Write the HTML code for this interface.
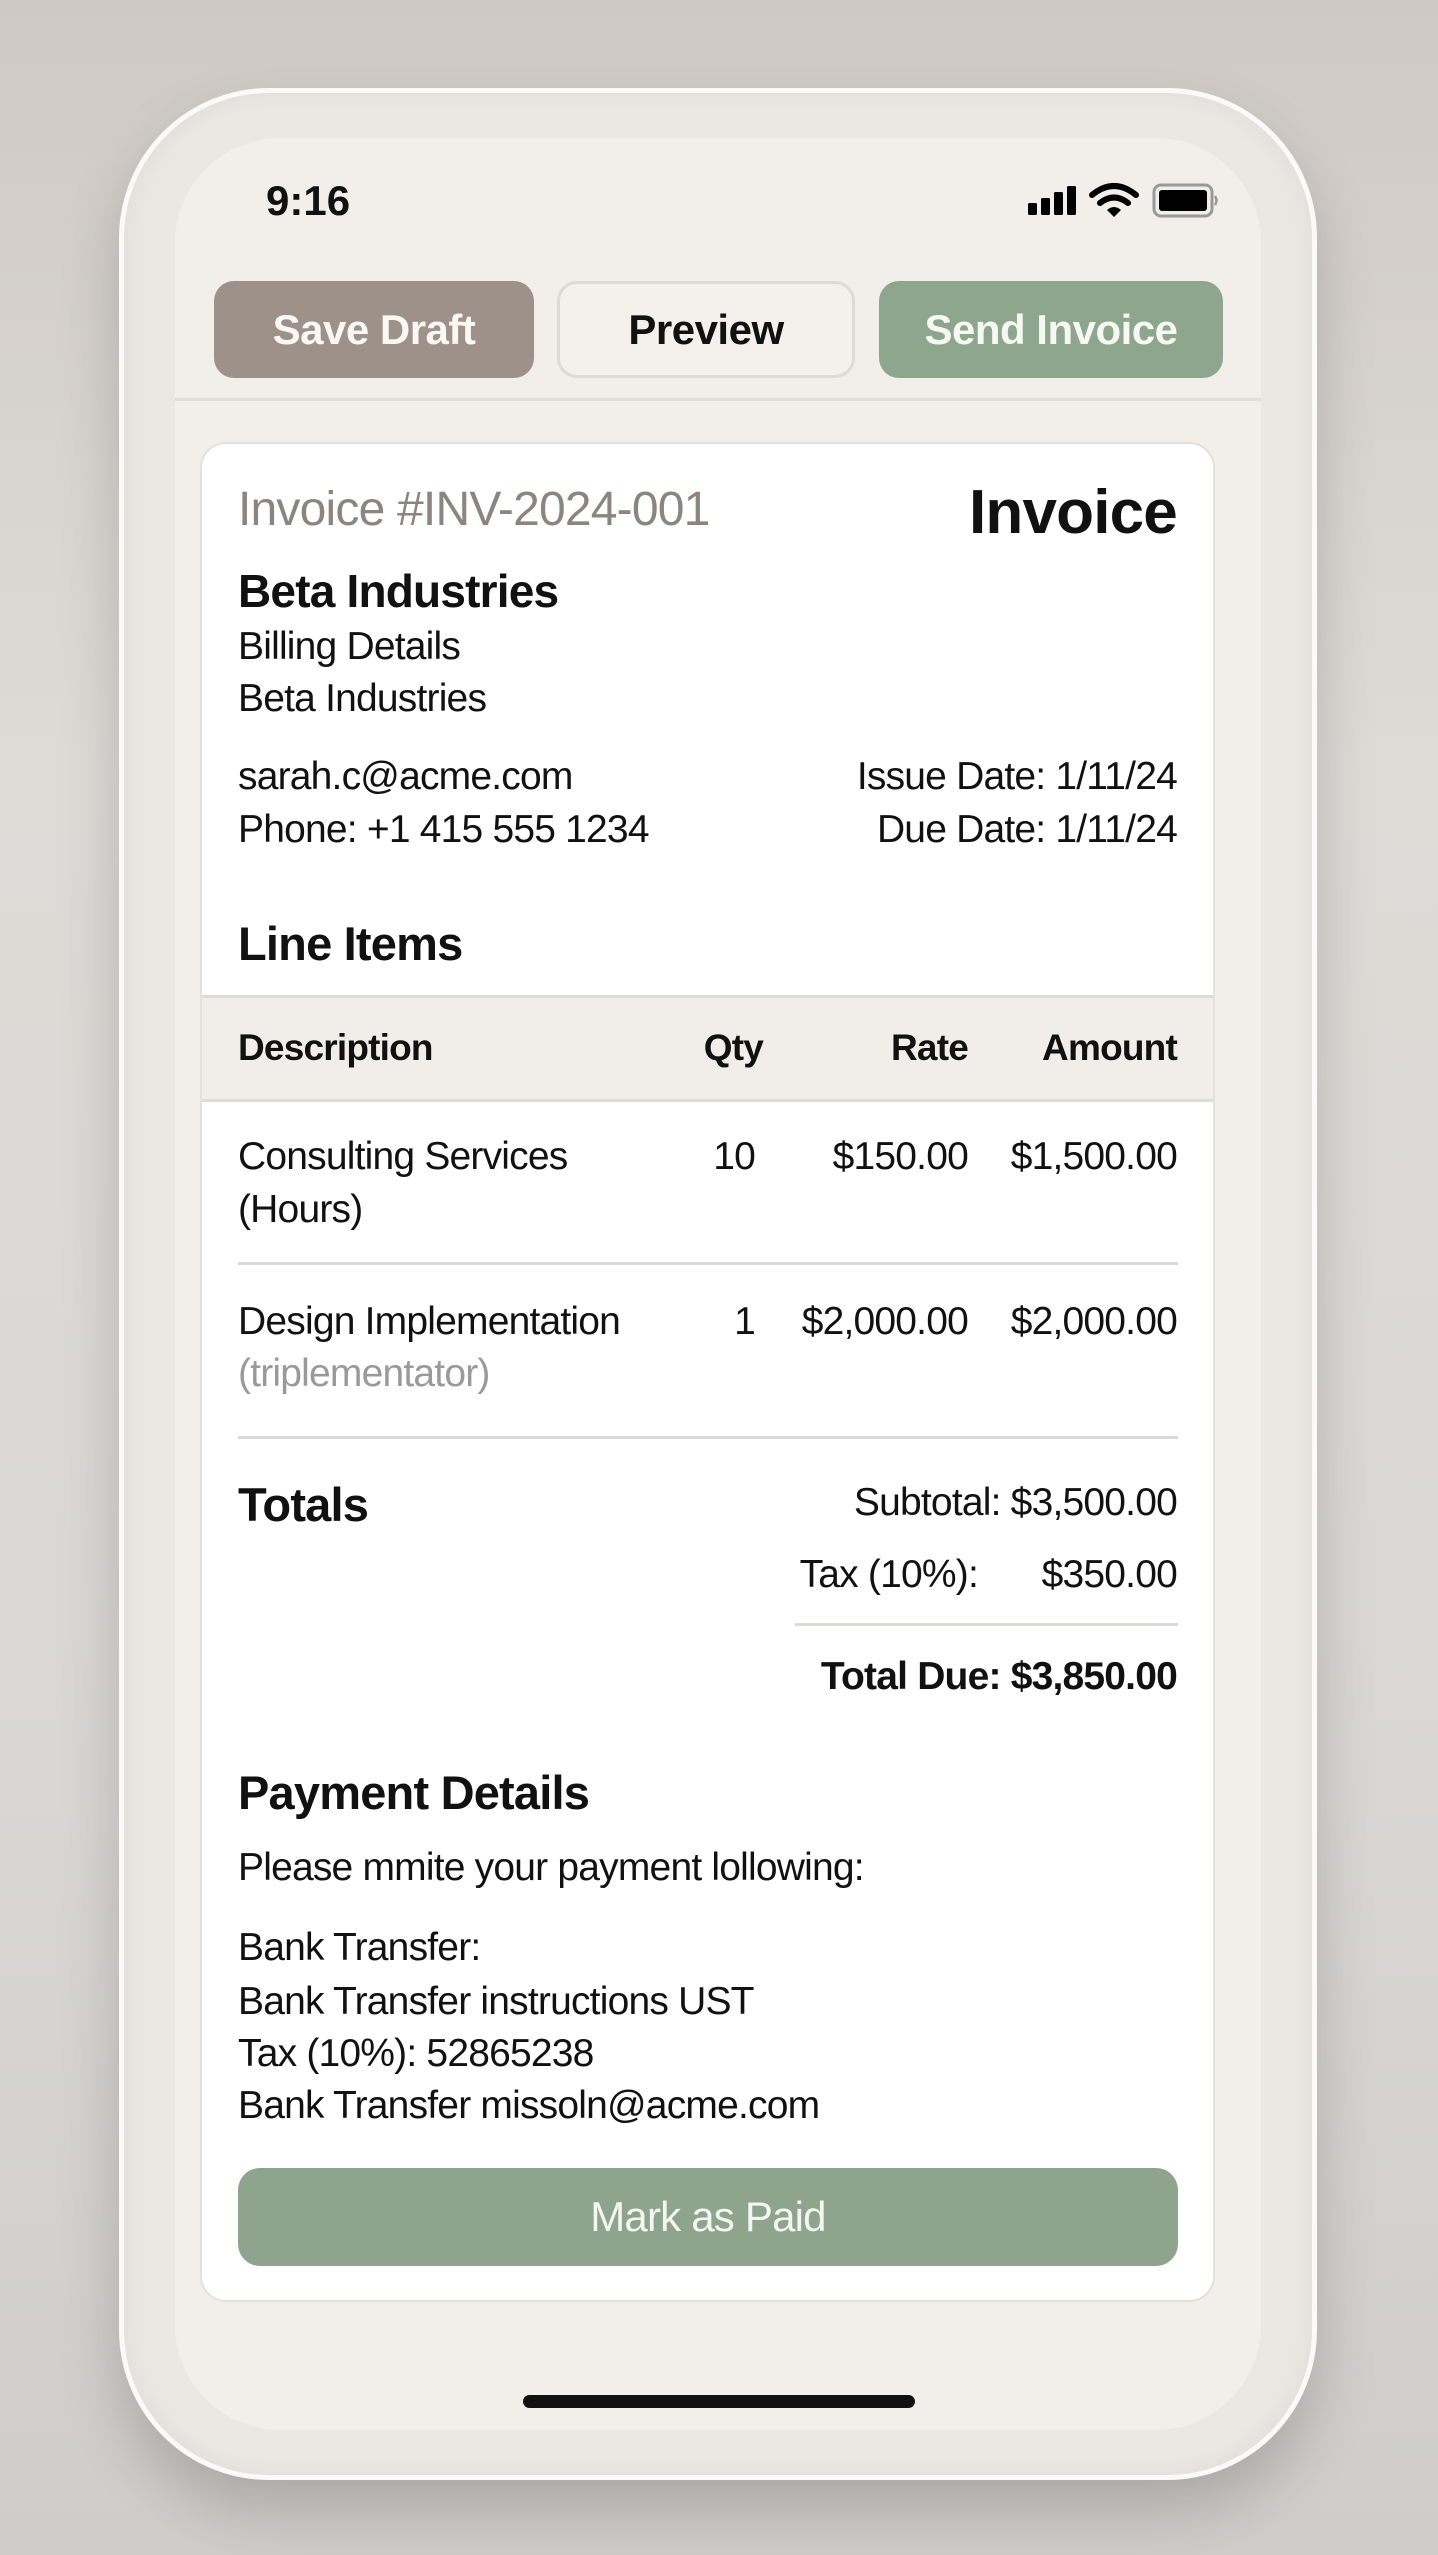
<!DOCTYPE html>
<html><head><meta charset="utf-8">
<style>
*{margin:0;padding:0;box-sizing:border-box}
html,body{width:1438px;height:2555px;overflow:hidden}
body{background:linear-gradient(180deg,#cfc9c3 0%,#dedbd7 30%,#d9d7d4 70%,#cfccc9 100%);font-family:"Liberation Sans",sans-serif;color:#111;position:relative;letter-spacing:-0.8px}
.phone{position:absolute;left:119px;top:88px;width:1198px;height:2392px;border-radius:150px;background:#ebe7e2;border:5px solid #fbfaf8;box-shadow:0 30px 60px rgba(0,0,0,.18),inset 0 0 30px rgba(0,0,0,.05)}
.screen{position:absolute;left:175px;top:138px;width:1086px;height:2292px;border-radius:105px;background:#f2efea;overflow:hidden}
.a{position:absolute;white-space:nowrap}
.btn{position:absolute;top:281px;height:97px;border-radius:20px;display:flex;align-items:center;justify-content:center;font-weight:bold;font-size:42px;letter-spacing:-0.5px}
.card{position:absolute;left:200px;top:442px;width:1015px;height:1860px;background:#fff;border-radius:26px;border:2px solid #e4e0da}
.r{text-align:right}
.t{font-size:39px;line-height:50px}
.hr{position:absolute;height:3px;background:#dcdad7}
</style></head><body>
<div class="phone"></div>
<div class="screen"></div>
<div class="a" style="left:266px;top:176px;font-size:42px;font-weight:bold;line-height:50px;letter-spacing:0">9:16</div>
<svg class="a" style="left:1026px;top:183px" width="192" height="36" viewBox="0 0 192 36">
<rect x="2" y="20" width="9" height="12" rx="1.5"/><rect x="15" y="15" width="9" height="17" rx="1.5"/><rect x="28" y="9" width="9" height="23" rx="1.5"/><rect x="41" y="3" width="9" height="29" rx="1.5"/>
<path d="M66 12 Q88 -6 110 12" fill="none" stroke="#000" stroke-width="6" stroke-linecap="round"/>
<path d="M74 20 Q88 9 102 20" fill="none" stroke="#000" stroke-width="6" stroke-linecap="round"/>
<path d="M81 27 L88 34 L95 27 Q88 21 81 27Z"/>
<rect x="128" y="2" width="58" height="31" rx="7" fill="none" stroke="#999" stroke-width="3"/>
<rect x="133" y="7" width="48" height="21" rx="3"/>
<path d="M189 13 Q192 17.5 189 22" fill="none" stroke="#999" stroke-width="2.5"/>
</svg>
<div class="btn" style="left:214px;width:320px;background:#9d918a;color:#fbf8f4">Save Draft</div>
<div class="btn" style="left:557px;width:298px;background:#f4f1ec;border:3px solid #dedad4;color:#111">Preview</div>
<div class="btn" style="left:879px;width:344px;background:#8ea68d;color:#f6f8f3">Send Invoice</div>
<div class="a" style="left:175px;top:398px;width:1086px;height:3px;background:#e0ddd8"></div>
<div class="card"></div>
<div class="a" style="left:238px;top:482px;font-size:48px;line-height:56px;color:#8c847e">Invoice #INV-2024-001</div>
<div class="a r" style="right:261px;top:478px;font-size:62px;line-height:70px;font-weight:bold">Invoice</div>
<div class="a" style="left:238px;top:563px;font-size:46px;line-height:56px;font-weight:bold">Beta Industries</div>
<div class="a t" style="left:238px;top:622px">Billing Details</div>
<div class="a t" style="left:238px;top:674px">Beta Industries</div>
<div class="a t" style="left:238px;top:752px">sarah.c@acme.com</div>
<div class="a t" style="left:238px;top:805px">Phone: +1 415 555 1234</div>
<div class="a t r" style="right:261px;top:752px">Issue Date: 1/11/24</div>
<div class="a t r" style="right:261px;top:805px">Due Date: 1/11/24</div>
<div class="a" style="left:238px;top:916px;font-size:47px;line-height:56px;font-weight:bold">Line Items</div>
<div class="a" style="left:202px;top:995px;width:1011px;height:107px;background:#f1eee9;border-top:3px solid #dedbd6;border-bottom:3px solid #dedbd6"></div>
<div class="a" style="left:238px;top:1024px;font-size:37px;line-height:48px;font-weight:bold">Description</div>
<div class="a r" style="right:675px;top:1024px;font-size:37px;line-height:48px;font-weight:bold">Qty</div>
<div class="a r" style="right:470px;top:1024px;font-size:37px;line-height:48px;font-weight:bold">Rate</div>
<div class="a r" style="right:261px;top:1024px;font-size:37px;line-height:48px;font-weight:bold">Amount</div>
<div class="a t" style="left:238px;top:1132px">Consulting Services</div>
<div class="a t" style="left:238px;top:1185px">(Hours)</div>
<div class="a t r" style="right:683px;top:1132px">10</div>
<div class="a t r" style="right:470px;top:1132px">$150.00</div>
<div class="a t r" style="right:261px;top:1132px">$1,500.00</div>
<div class="hr" style="left:238px;top:1262px;width:940px"></div>
<div class="a t" style="left:238px;top:1297px">Design Implementation</div>
<div class="a t" style="left:238px;top:1349px;color:#999">(triplementator)</div>
<div class="a t r" style="right:683px;top:1297px">1</div>
<div class="a t r" style="right:470px;top:1297px">$2,000.00</div>
<div class="a t r" style="right:261px;top:1297px">$2,000.00</div>
<div class="hr" style="left:238px;top:1436px;width:940px"></div>
<div class="a" style="left:238px;top:1477px;font-size:47px;line-height:56px;font-weight:bold">Totals</div>
<div class="a t r" style="right:261px;top:1478px">Subtotal: $3,500.00</div>
<div class="a t r" style="right:460px;top:1550px">Tax (10%):</div>
<div class="a t r" style="right:261px;top:1550px">$350.00</div>
<div class="hr" style="left:795px;top:1623px;width:383px"></div>
<div class="a t r" style="right:261px;top:1652px;font-weight:bold">Total Due: $3,850.00</div>
<div class="a" style="left:238px;top:1765px;font-size:47px;line-height:56px;font-weight:bold">Payment Details</div>
<div class="a t" style="left:238px;top:1843px">Please mmite your payment lollowing:</div>
<div class="a t" style="left:238px;top:1923px">Bank Transfer:</div>
<div class="a t" style="left:238px;top:1977px">Bank Transfer instructions UST</div>
<div class="a t" style="left:238px;top:2029px">Tax (10%): 52865238</div>
<div class="a t" style="left:238px;top:2081px">Bank Transfer missoln@acme.com</div>
<div class="a" style="left:238px;top:2168px;width:940px;height:98px;border-radius:22px;background:#8fa48c;color:#f4f6f1;font-size:42px;display:flex;align-items:center;justify-content:center">Mark as Paid</div>
<div class="a" style="left:523px;top:2395px;width:392px;height:13px;border-radius:7px;background:#111"></div>
</body></html>
